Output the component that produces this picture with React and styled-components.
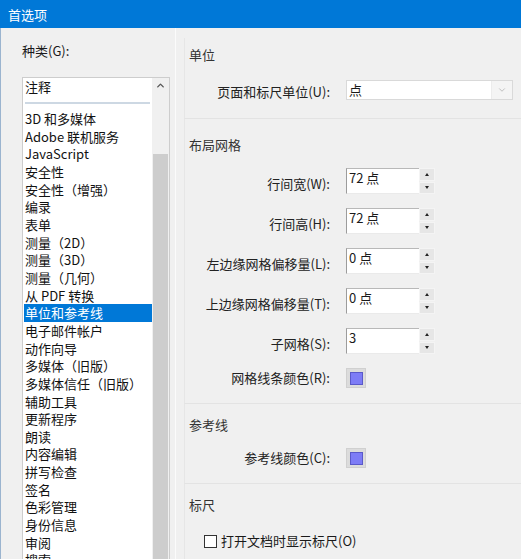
import React from 'react'
import styled, { createGlobalStyle } from 'styled-components'
import { ChevronDown, ChevronUp } from 'lucide-react'

const GlobalStyle = createGlobalStyle`
    *{ box-sizing:border-box; }
    body{
        margin:0;
        background:#f0f0f0;
        font-family:"Noto Sans CJK SC","Noto Sans",sans-serif;
        font-size:13px;
        color:#1a1a1a;
    }
`
const Window = styled.div`
    width:521px;
    height:559px;
    overflow:hidden;
    display:flex;
    flex-direction:column;
    background:#f0f0f0;
`
const TitleBar = styled.div`
    height:28px;
    flex:none;
    background:#0078d7;
    color:#fff;
    display:flex;
    align-items:center;
    padding-left:8px;
    font-size:13px;
`
const Main = styled.div`
    flex:1;
    display:flex;
    min-height:0;
    border-left:1px solid #9bb4cf;
`
const LeftPane = styled.div`
    width:169px;
    flex:none;
    padding:14px 0 0 21px;
    display:flex;
    flex-direction:column;
`
const PaneLabel = styled.div`
    line-height:18px;
    margin-bottom:17px;
`
const ListBox = styled.div`
    flex:1;
    display:flex;
    background:#fff;
    border:1px solid #cdcdcd;
    border-bottom:none;
    min-height:0;
`
const Items = styled.div`
    flex:1;
    padding-left:1px;
    overflow:hidden;
`
const Item = styled.div`
    height:${p => p.$h || 17.67}px;
    line-height:${p => p.$h || 17.67}px;
    padding-left:1px;
    white-space:nowrap;
    background:${p => p.$active ? '#0078d7' : 'transparent'};
    color:${p => p.$active ? '#fff' : '#111'};
`
const ListRule = styled.div`
    height:2px;
    margin:6px 2px 6px 1px;
    background:#cdd8e3;
`
const ScrollBar = styled.div`
    width:17px;
    flex:none;
    background:#f0f0f0;
    display:flex;
    flex-direction:column;
`
const ArrowBtn = styled.div`
    height:14px;
    display:flex;
    align-items:center;
    justify-content:center;
    color:#555;
`
const Thumb = styled.div`
    flex:1;
    margin:62px 1px 0;
    background:#cdcdcd;
`
const RightPane = styled.div`
    flex:1;
    margin-left:5px;
    padding:10px 0 0 8px;
    border-left:1px solid #fbfbfb;
`
const Section = styled.div`
    border-left:1px solid #e6e6e6;
    border-bottom:1px solid #e3e3e3;
    padding:${p => p.$pad};
`
const SectionTitle = styled.div`
    line-height:18px;
    padding-left:4px;
    color:#333;
`
const Rows = styled.div`
    display:flex;
    flex-direction:column;
    gap:${p => p.$gap || 14}px;
    margin-top:${p => p.$top}px;
`
const Row = styled.div`
    display:grid;
    grid-template-columns:145px auto;
    column-gap:16px;
    align-items:center;
    height:${p => p.$h}px;
`
const Label = styled.div`
    text-align:right;
    line-height:18px;
    white-space:nowrap;
    padding-top:${p => p.$shift || 0}px;
    color:#222;
`
const Select = styled.div`
    width:167px;
    height:20px;
    border:1px solid #d9d9d9;
    background:#fff;
    display:flex;
    align-items:center;
`
const SelectText = styled.div`
    flex:1;
    padding-left:2px;
    line-height:16px;
`
const SelectArrow = styled.div`
    width:21px;
    height:100%;
    background:#f4f4f4;
    border-left:1px solid #ececec;
    display:flex;
    align-items:center;
    justify-content:center;
    color:#b5b5b5;
`
const Spin = styled.div`
    display:flex;
    height:26px;
`
const SpinField = styled.div`
    width:73px;
    background:#fff;
    border-top:1px solid #b8b8b8;
    border-left:1px solid #9c9c9c;
    border-bottom:1px solid #eaeaea;
    padding:0 2px;
    line-height:18px;
`
const SpinButtons = styled.div`
    width:16px;
    display:flex;
    flex-direction:column;
    gap:1px;
`
const SpinBtn = styled.div`
    flex:1;
    background:#e6e6e6;
    border:1px solid #f4f4f4;
    display:flex;
    align-items:center;
    justify-content:center;
    &::after{
        content:'';
        border-left:2.5px solid transparent;
        border-right:2.5px solid transparent;
        ${p => p.$down ? 'border-top:3px solid #222;' : 'border-bottom:3px solid #222;'}
    }
`
const Swatch = styled.div`
    width:20px;
    height:20px;
    background:#dcdcdc;
    border:1px solid #d0d0d0;
    display:flex;
    align-items:center;
    justify-content:center;
`
const SwatchColor = styled.div`
    width:13px;
    height:13px;
    background:#7d7cf6;
    border:1px solid #5a59c9;
`
const CheckRow = styled.label`
    display:flex;
    align-items:center;
    gap:4px;
    margin:18px 0 0 19px;
    line-height:18px;
`
const Box = styled.span`
    width:13px;
    height:13px;
    border:1px solid #333;
    background:#fff;
`

const categories = ['3D 和多媒体','Adobe 联机服务','JavaScript','安全性','安全性（增强）','编录','表单','测量（2D）','测量（3D）','测量（几何）','从 PDF 转换','单位和参考线','电子邮件帐户','动作向导','多媒体（旧版）','多媒体信任（旧版）','辅助工具','更新程序','朗读','内容编辑','拼写检查','签名','色彩管理','身份信息','审阅','搜索']

const spins = [
    ['行间宽(W):','72 点'],
    ['行间高(H):','72 点'],
    ['左边缘网格偏移量(L):','0 点'],
    ['上边缘网格偏移量(T):','0 点'],
    ['子网格(S):','3'],
]

function SpinBox({value}){
    return(
        <Spin>
            <SpinField>{value}</SpinField>
            <SpinButtons>
                <SpinBtn/>
                <SpinBtn $down/>
            </SpinButtons>
        </Spin>
    )
}

function App() {
  return (
  <>
  <GlobalStyle/>
  <Window>
    <TitleBar>首选项</TitleBar>
    <Main>
      <LeftPane>
        <PaneLabel>种类(G):</PaneLabel>
        <ListBox>
          <Items>
            <Item $h={18}>注释</Item>
            <ListRule/>
            {categories.map(name => (
              <Item key={name} $active={name==='单位和参考线'}>{name}</Item>
            ))}
          </Items>
          <ScrollBar>
            <ArrowBtn><ChevronUp size={11} strokeWidth={3}/></ArrowBtn>
            <Thumb/>
          </ScrollBar>
        </ListBox>
      </LeftPane>
      <RightPane>
        <Section $pad="8px 0 19px">
          <SectionTitle>单位</SectionTitle>
          <Rows $top={15}>
            <Row $h={20}>
              <Label $shift={4}>页面和标尺单位(U):</Label>
              <Select>
                <SelectText>点</SelectText>
                <SelectArrow><ChevronDown size={10}/></SelectArrow>
              </Select>
            </Row>
          </Rows>
        </Section>
        <Section $pad="17px 0 17px">
          <SectionTitle>布局网格</SectionTitle>
          <Rows $top={14} $gap={14}>
            {spins.map(([label,value]) => (
              <Row key={label} $h={26}>
                <Label $shift={6}>{label}</Label>
                <SpinBox value={value}/>
              </Row>
            ))}
            <Row $h={18}>
              <Label>网格线条颜色(R):</Label>
              <Swatch><SwatchColor/></Swatch>
            </Row>
          </Rows>
        </Section>
        <Section $pad="12px 0 15px">
          <SectionTitle>参考线</SectionTitle>
          <Rows $top={14}>
            <Row $h={20}>
              <Label>参考线颜色(C):</Label>
              <Swatch><SwatchColor/></Swatch>
            </Row>
          </Rows>
        </Section>
        <Section $pad="12px 0 20px">
          <SectionTitle>标尺</SectionTitle>
          <CheckRow><Box/>打开文档时显示标尺(O)</CheckRow>
        </Section>
      </RightPane>
    </Main>
  </Window>
  </>
  )
}

export default App;
